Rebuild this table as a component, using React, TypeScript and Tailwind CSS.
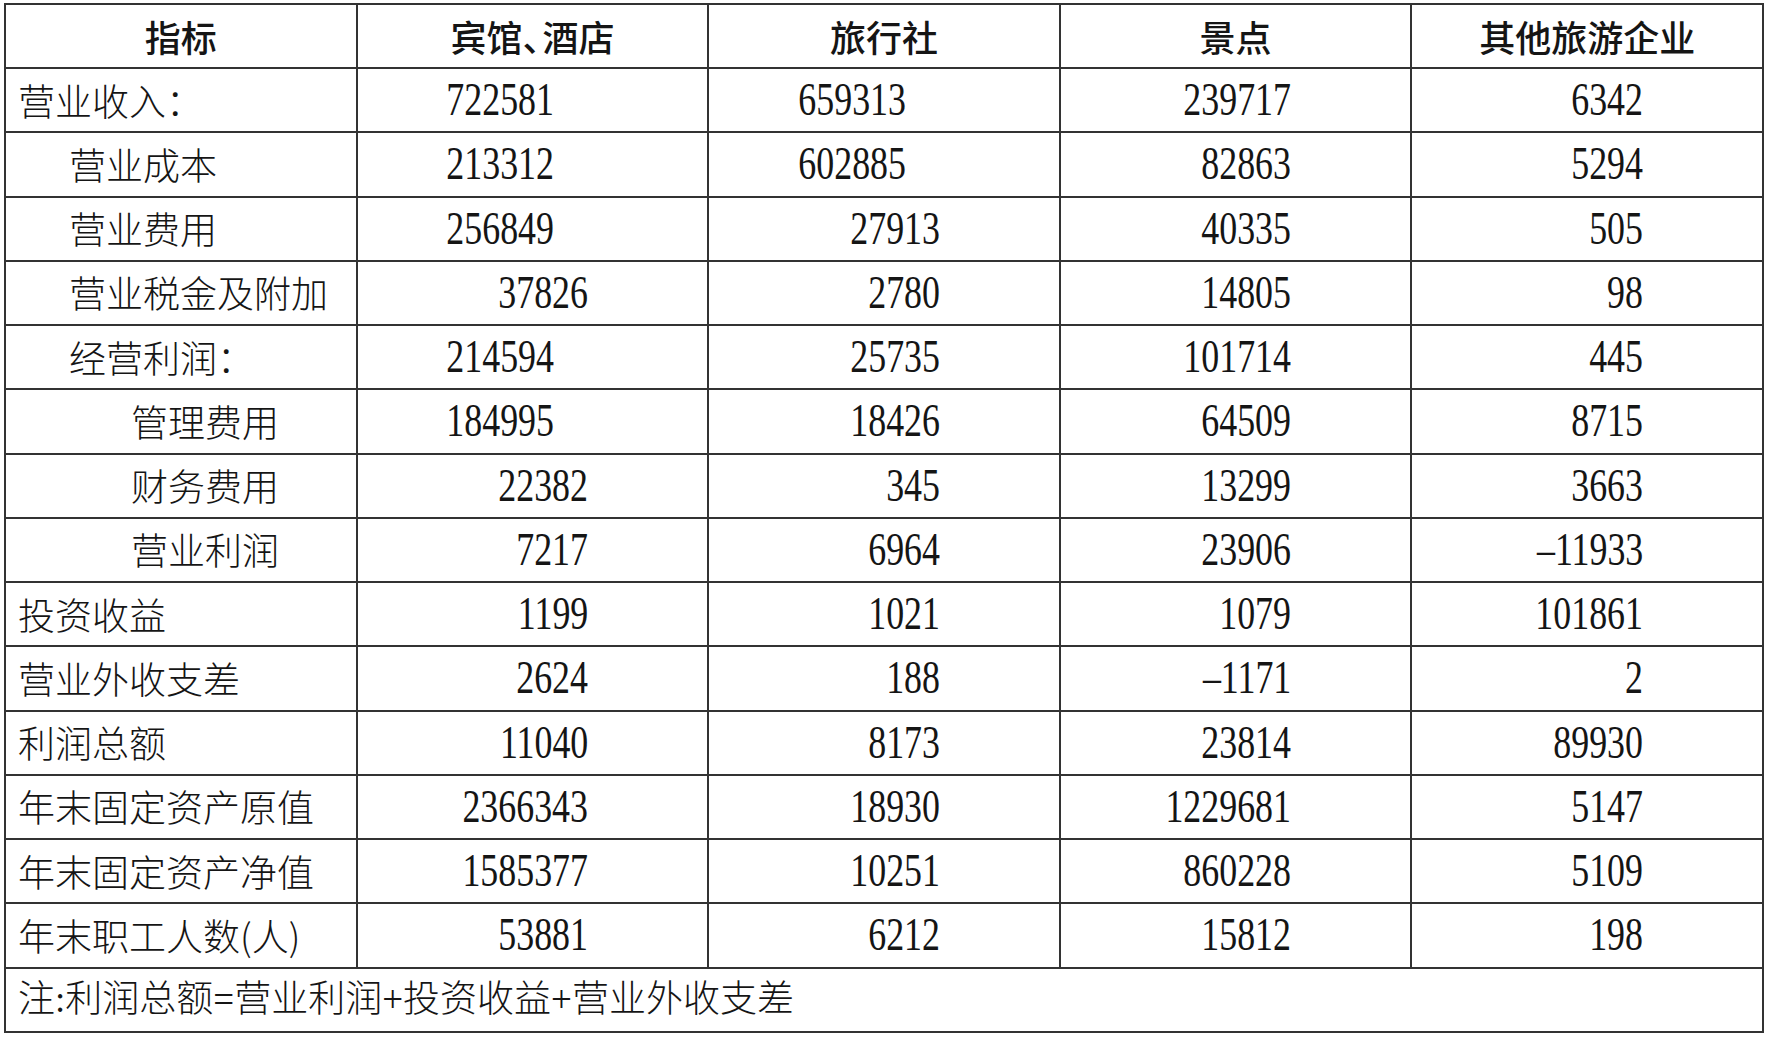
const rows: { label: string; level: number; values: string[]; shift?: boolean[] }[] = [
  { label: "营业收入：", level: 0, values: ["722581", "659313", "239717", "6342"], shift: [true, true] },
  { label: "营业成本", level: 1, values: ["213312", "602885", "82863", "5294"], shift: [true, true] },
  { label: "营业费用", level: 1, values: ["256849", "27913", "40335", "505"], shift: [true] },
  { label: "营业税金及附加", level: 1, values: ["37826", "2780", "14805", "98"] },
  { label: "经营利润：", level: 1, values: ["214594", "25735", "101714", "445"], shift: [true] },
  { label: "管理费用", level: 2, values: ["184995", "18426", "64509", "8715"], shift: [true] },
  { label: "财务费用", level: 2, values: ["22382", "345", "13299", "3663"] },
  { label: "营业利润", level: 2, values: ["7217", "6964", "23906", "–11933"] },
  { label: "投资收益", level: 0, values: ["1199", "1021", "1079", "101861"] },
  { label: "营业外收支差", level: 0, values: ["2624", "188", "–1171", "2"] },
  { label: "利润总额", level: 0, values: ["11040", "8173", "23814", "89930"] },
  { label: "年末固定资产原值", level: 0, values: ["2366343", "18930", "1229681", "5147"] },
  { label: "年末固定资产净值", level: 0, values: ["1585377", "10251", "860228", "5109"] },
  { label: "年末职工人数(人)", level: 0, values: ["53881", "6212", "15812", "198"] },
];

const indent = ["pl-[12px]", "pl-[63px]", "pl-[125px]"];

const cell = "border-2 border-[#333] align-middle";
const head = `${cell} text-center text-[36px] leading-none font-medium font-['Noto_Sans_CJK_SC',sans-serif]`;

export default function App() {
  return (
    <div className="w-[1768px] h-[1039px] bg-white pt-[3px] pl-[4px] text-[#151515]">
      <table className="w-[1760px] table-fixed border-collapse text-[#151515]">
        <thead>
          <tr className="h-[64px]">
            <th className={head}>指标</th>
            <th className={head}>
              宾馆<span className="inline-block w-[20px] text-left">、</span>酒店
            </th>
            <th className={head}>旅行社</th>
            <th className={head}>景点</th>
            <th className={head}>其他旅游企业</th>
          </tr>
        </thead>
        <tbody>
          {rows.map((r) => (
            <tr key={r.label} className="h-[64.25px]">
              <td
                className={`${cell} text-left text-[37px] leading-none whitespace-nowrap font-light font-['Noto_Sans_CJK_SC',sans-serif] ${indent[r.level]}`}
              >
                {r.label}
              </td>
              {r.values.map((v, i) => (
                <td
                  key={i}
                  className={`${cell} text-right text-[46px] leading-none font-['Liberation_Serif',serif] ${
                    r.shift && r.shift[i] && i < 2 ? "pr-[153px]" : "pr-[119px]"
                  }`}
                >
                  <span className="inline-block origin-right scale-x-[0.78]">{v}</span>
                </td>
              ))}
            </tr>
          ))}
          <tr className="h-[64.25px]">
            <td
              colSpan={5}
              className={`${cell} pl-[12px] text-left text-[37px] leading-none font-light font-['Liberation_Serif','Noto_Sans_CJK_SC',serif]`}
            >
              注:利润总额=营业利润+投资收益+营业外收支差
            </td>
          </tr>
        </tbody>
      </table>
    </div>
  );
}
